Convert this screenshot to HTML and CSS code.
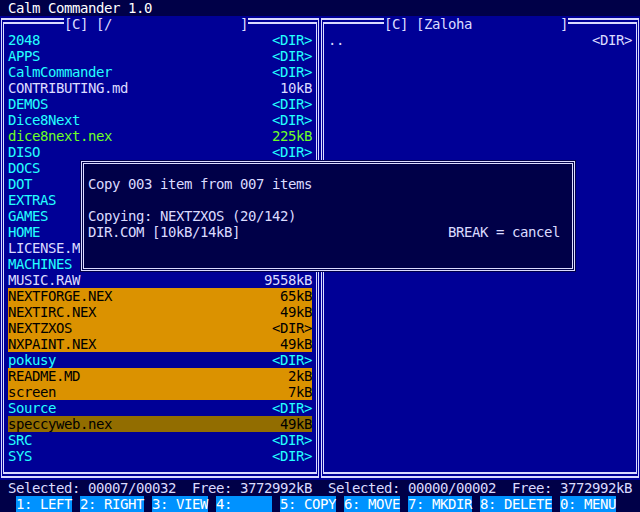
FILE: index.html
```html
<!DOCTYPE html>
<html>
<head>
<meta charset="utf-8">
<link rel="stylesheet" href="styles.css">
</head>
<body>
<div class="screen">
  <div class="title">Calm Commander 1.0</div>
  <div class="panels">
    <div class="panel">
      <div class="caption"><span>[C] [/</span><span>]</span></div>
      <div class="list">
        <div class="row dir"><span>2048</span><span>&lt;DIR&gt;</span></div>
        <div class="row dir"><span>APPS</span><span>&lt;DIR&gt;</span></div>
        <div class="row dir"><span>CalmCommander</span><span>&lt;DIR&gt;</span></div>
        <div class="row file"><span>CONTRIBUTING.md</span><span>10kB</span></div>
        <div class="row dir"><span>DEMOS</span><span>&lt;DIR&gt;</span></div>
        <div class="row dir"><span>Dice8Next</span><span>&lt;DIR&gt;</span></div>
        <div class="row exe"><span>dice8next.nex</span><span>225kB</span></div>
        <div class="row dir"><span>DISO</span><span>&lt;DIR&gt;</span></div>
        <div class="row dir"><span>DOCS</span><span></span></div>
        <div class="row dir"><span>DOT</span><span></span></div>
        <div class="row dir"><span>EXTRAS</span><span></span></div>
        <div class="row dir"><span>GAMES</span><span></span></div>
        <div class="row dir"><span>HOME</span><span></span></div>
        <div class="row file"><span>LICENSE.M</span><span></span></div>
        <div class="row dir"><span>MACHINES</span><span></span></div>
        <div class="row file"><span>MUSIC.RAW</span><span>9558kB</span></div>
        <div class="row sel"><span>NEXTFORGE.NEX</span><span>65kB</span></div>
        <div class="row sel"><span>NEXTIRC.NEX</span><span>49kB</span></div>
        <div class="row sel"><span>NEXTZXOS</span><span>&lt;DIR&gt;</span></div>
        <div class="row sel"><span>NXPAINT.NEX</span><span>49kB</span></div>
        <div class="row dir"><span>pokusy</span><span>&lt;DIR&gt;</span></div>
        <div class="row sel"><span>README.MD</span><span>2kB</span></div>
        <div class="row sel"><span>screen</span><span>7kB</span></div>
        <div class="row dir"><span>Source</span><span>&lt;DIR&gt;</span></div>
        <div class="row cursor"><span>speccyweb.nex</span><span>49kB</span></div>
        <div class="row dir"><span>SRC</span><span>&lt;DIR&gt;</span></div>
        <div class="row dir"><span>SYS</span><span>&lt;DIR&gt;</span></div>
      </div>
    </div>
    <div class="panel">
      <div class="caption"><span>[C] [Zaloha</span><span>]</span></div>
      <div class="list">
        <div class="row file"><span>..</span><span>&lt;DIR&gt;</span></div>
      </div>
    </div>
  </div>
  <div class="status">
    <div class="stat"><span>Selected: 00007/00032</span><span>Free: 3772992kB</span></div>
    <div class="stat"><span>Selected: 00000/00002</span><span>Free: 3772992kB</span></div>
  </div>
  <div class="fkeys">
    <span class="fk">1: LEFT</span>
    <span class="fk">2: RIGHT</span>
    <span class="fk">3: VIEW</span>
    <span class="fk">4:     </span>
    <span class="fk">5: COPY</span>
    <span class="fk">6: MOVE</span>
    <span class="fk">7: MKDIR</span>
    <span class="fk">8: DELETE</span>
    <span class="fk">0: MENU</span>
  </div>
  <div class="dialog">
    <div class="dline">Copy 003 item from 007 items</div>
    <div class="dline"></div>
    <div class="dline">Copying: NEXTZXOS (20/142)</div>
    <div class="dline split"><span>DIR.COM [10kB/14kB]</span><span>BREAK = cancel</span></div>
  </div>
</div>
</body>
</html>
```
FILE: styles.css
```css
* { box-sizing: border-box; }
html, body { margin: 0; padding: 0; background: #000048; }
.screen {
  position: relative;
  width: 640px;
  height: 512px;
  overflow: hidden;
  background: #000048;
  font-family: "DejaVu Sans Mono", "Liberation Mono", monospace;
  font-size: 14px;
  letter-spacing: -0.43px;
  line-height: 16px;
  color: #dbdbff;
}
.title, .caption span, .row span, .stat span, .fk, .dline { white-space: pre; }
.title {
  height: 16px;
  padding-left: 8px;
  color: #ffffff;
}
.panels {
  display: grid;
  grid-template-columns: 320px 320px;
}
.panel {
  position: relative;
  height: 464px;
  padding: 0 8px;
  background: #000096;
}
.panel::before {
  content: "";
  position: absolute;
  top: 2px;
  bottom: 2px;
  left: 1px;
  right: 1px;
  border-style: double;
  border-color: #dbdbff;
  border-width: 6px 3px;
}
.caption {
  position: relative;
  z-index: 1;
  display: flex;
  justify-content: space-between;
  width: 184px;
  height: 16px;
  margin-left: 56px;
  background: #000096;
  color: #dbdbff;
}
.list { position: relative; z-index: 1; }
.row {
  display: flex;
  justify-content: space-between;
  height: 16px;
}
.dir { color: #24ffff; }
.file { color: #dbdbff; }
.exe { color: #6dff24; }
.sel { background: #db9200; color: #000000; }
.cursor { background: #926d00; color: #000000; }
.status {
  display: grid;
  grid-template-columns: 320px 320px;
  height: 16px;
}
.stat {
  display: flex;
  justify-content: space-between;
  padding: 0 8px;
}
.fkeys {
  display: flex;
  gap: 8px;
  height: 16px;
  padding-left: 16px;
}
.fk {
  background: #0092ff;
  color: #ffffff;
}
.dialog {
  position: absolute;
  z-index: 2;
  left: 80px;
  top: 160px;
  width: 496px;
  height: 112px;
  padding: 16px 16px 0 8px;
  background: #000048;
  color: #dbdbff;
}
.dialog::before {
  content: "";
  position: absolute;
  top: 1px;
  left: 1px;
  right: 1px;
  bottom: 1px;
  border: 3px double #dbdbff;
}
.dline { height: 16px; }
.split {
  display: flex;
  justify-content: space-between;
}
```
